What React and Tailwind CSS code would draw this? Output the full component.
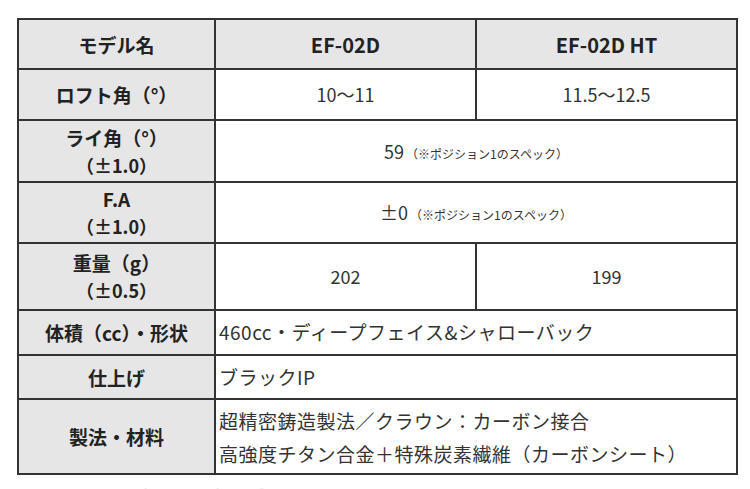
export default function App() {
  const th = "bg-[#e6e6e6] border-2 border-[#333] font-bold text-[19px] text-[#222] text-center align-middle leading-[27px]";
  const td = "border-2 border-[#333] text-[18px] text-[#333] align-middle";
  const tl = "border-2 border-[#333] text-[19px] tracking-[0.5px] text-[#333] align-middle text-left pl-[3px]";
  return (
    <div className="w-[750px] h-[489px] bg-white overflow-hidden" style={{ fontFamily: '"Noto Sans CJK JP", "Noto Sans", sans-serif' }}>
      <div className="pt-[18px] pl-[17px]">
        <table className="border-collapse table-fixed w-[719px]">
          <colgroup>
            <col className="w-[197px]" />
            <col className="w-[261px]" />
            <col className="w-[261px]" />
          </colgroup>
          <tbody>
            <tr className="h-[50px]">
              <td className={th + " text-[18px]"}>モデル名</td>
              <td className={th + " text-[20px]"}>EF-02D</td>
              <td className={th + " text-[20px]"}>EF-02D HT</td>
            </tr>
            <tr className="h-[51px]">
              <td className={th}>ロフト角（°）</td>
              <td className={td + " text-center"}>10〜11</td>
              <td className={td + " text-center"}>11.5〜12.5</td>
            </tr>
            <tr className="h-[62px]">
              <td className={th}>ライ角（°）<br /><span className="text-[18px]">（±1.0）</span></td>
              <td colSpan={2} className={td + " text-center"}>
                59<span className="text-[12px] ml-[2px]">（※ポジション1のスペック）</span>
              </td>
            </tr>
            <tr className="h-[61px]">
              <td className={th}>F.A<br /><span className="text-[18px]">（±1.0）</span></td>
              <td colSpan={2} className={td + " text-center"}>
                ±0<span className="text-[12px] ml-[2px]">（※ポジション1のスペック）</span>
              </td>
            </tr>
            <tr className="h-[67px]">
              <td className={th}>重量（g）<br /><span className="text-[18px]">（±0.5）</span></td>
              <td className={td + " text-center"}>202</td>
              <td className={td + " text-center"}>199</td>
            </tr>
            <tr className="h-[45px]">
              <td className={th}>体積（cc）・形状</td>
              <td colSpan={2} className={tl}>460cc・ディープフェイス&amp;シャローバック</td>
            </tr>
            <tr className="h-[44px]">
              <td className={th}>仕上げ</td>
              <td colSpan={2} className={tl}>ブラックIP</td>
            </tr>
            <tr className="h-[75px]">
              <td className={th}>製法・材料</td>
              <td colSpan={2} className={tl + " leading-[33px]"}>
                超精密鋳造製法／クラウン：カーボン接合<br />高強度チタン合金＋特殊炭素繊維（カーボンシート）
              </td>
            </tr>
          </tbody>
        </table>
        <div className="mt-[8px] pl-[50px] text-[18px] leading-[27px] text-[#ececec]">※ロフト角・ライ角はポジション1のスペックです。</div>
      </div>
    </div>
  );
}
